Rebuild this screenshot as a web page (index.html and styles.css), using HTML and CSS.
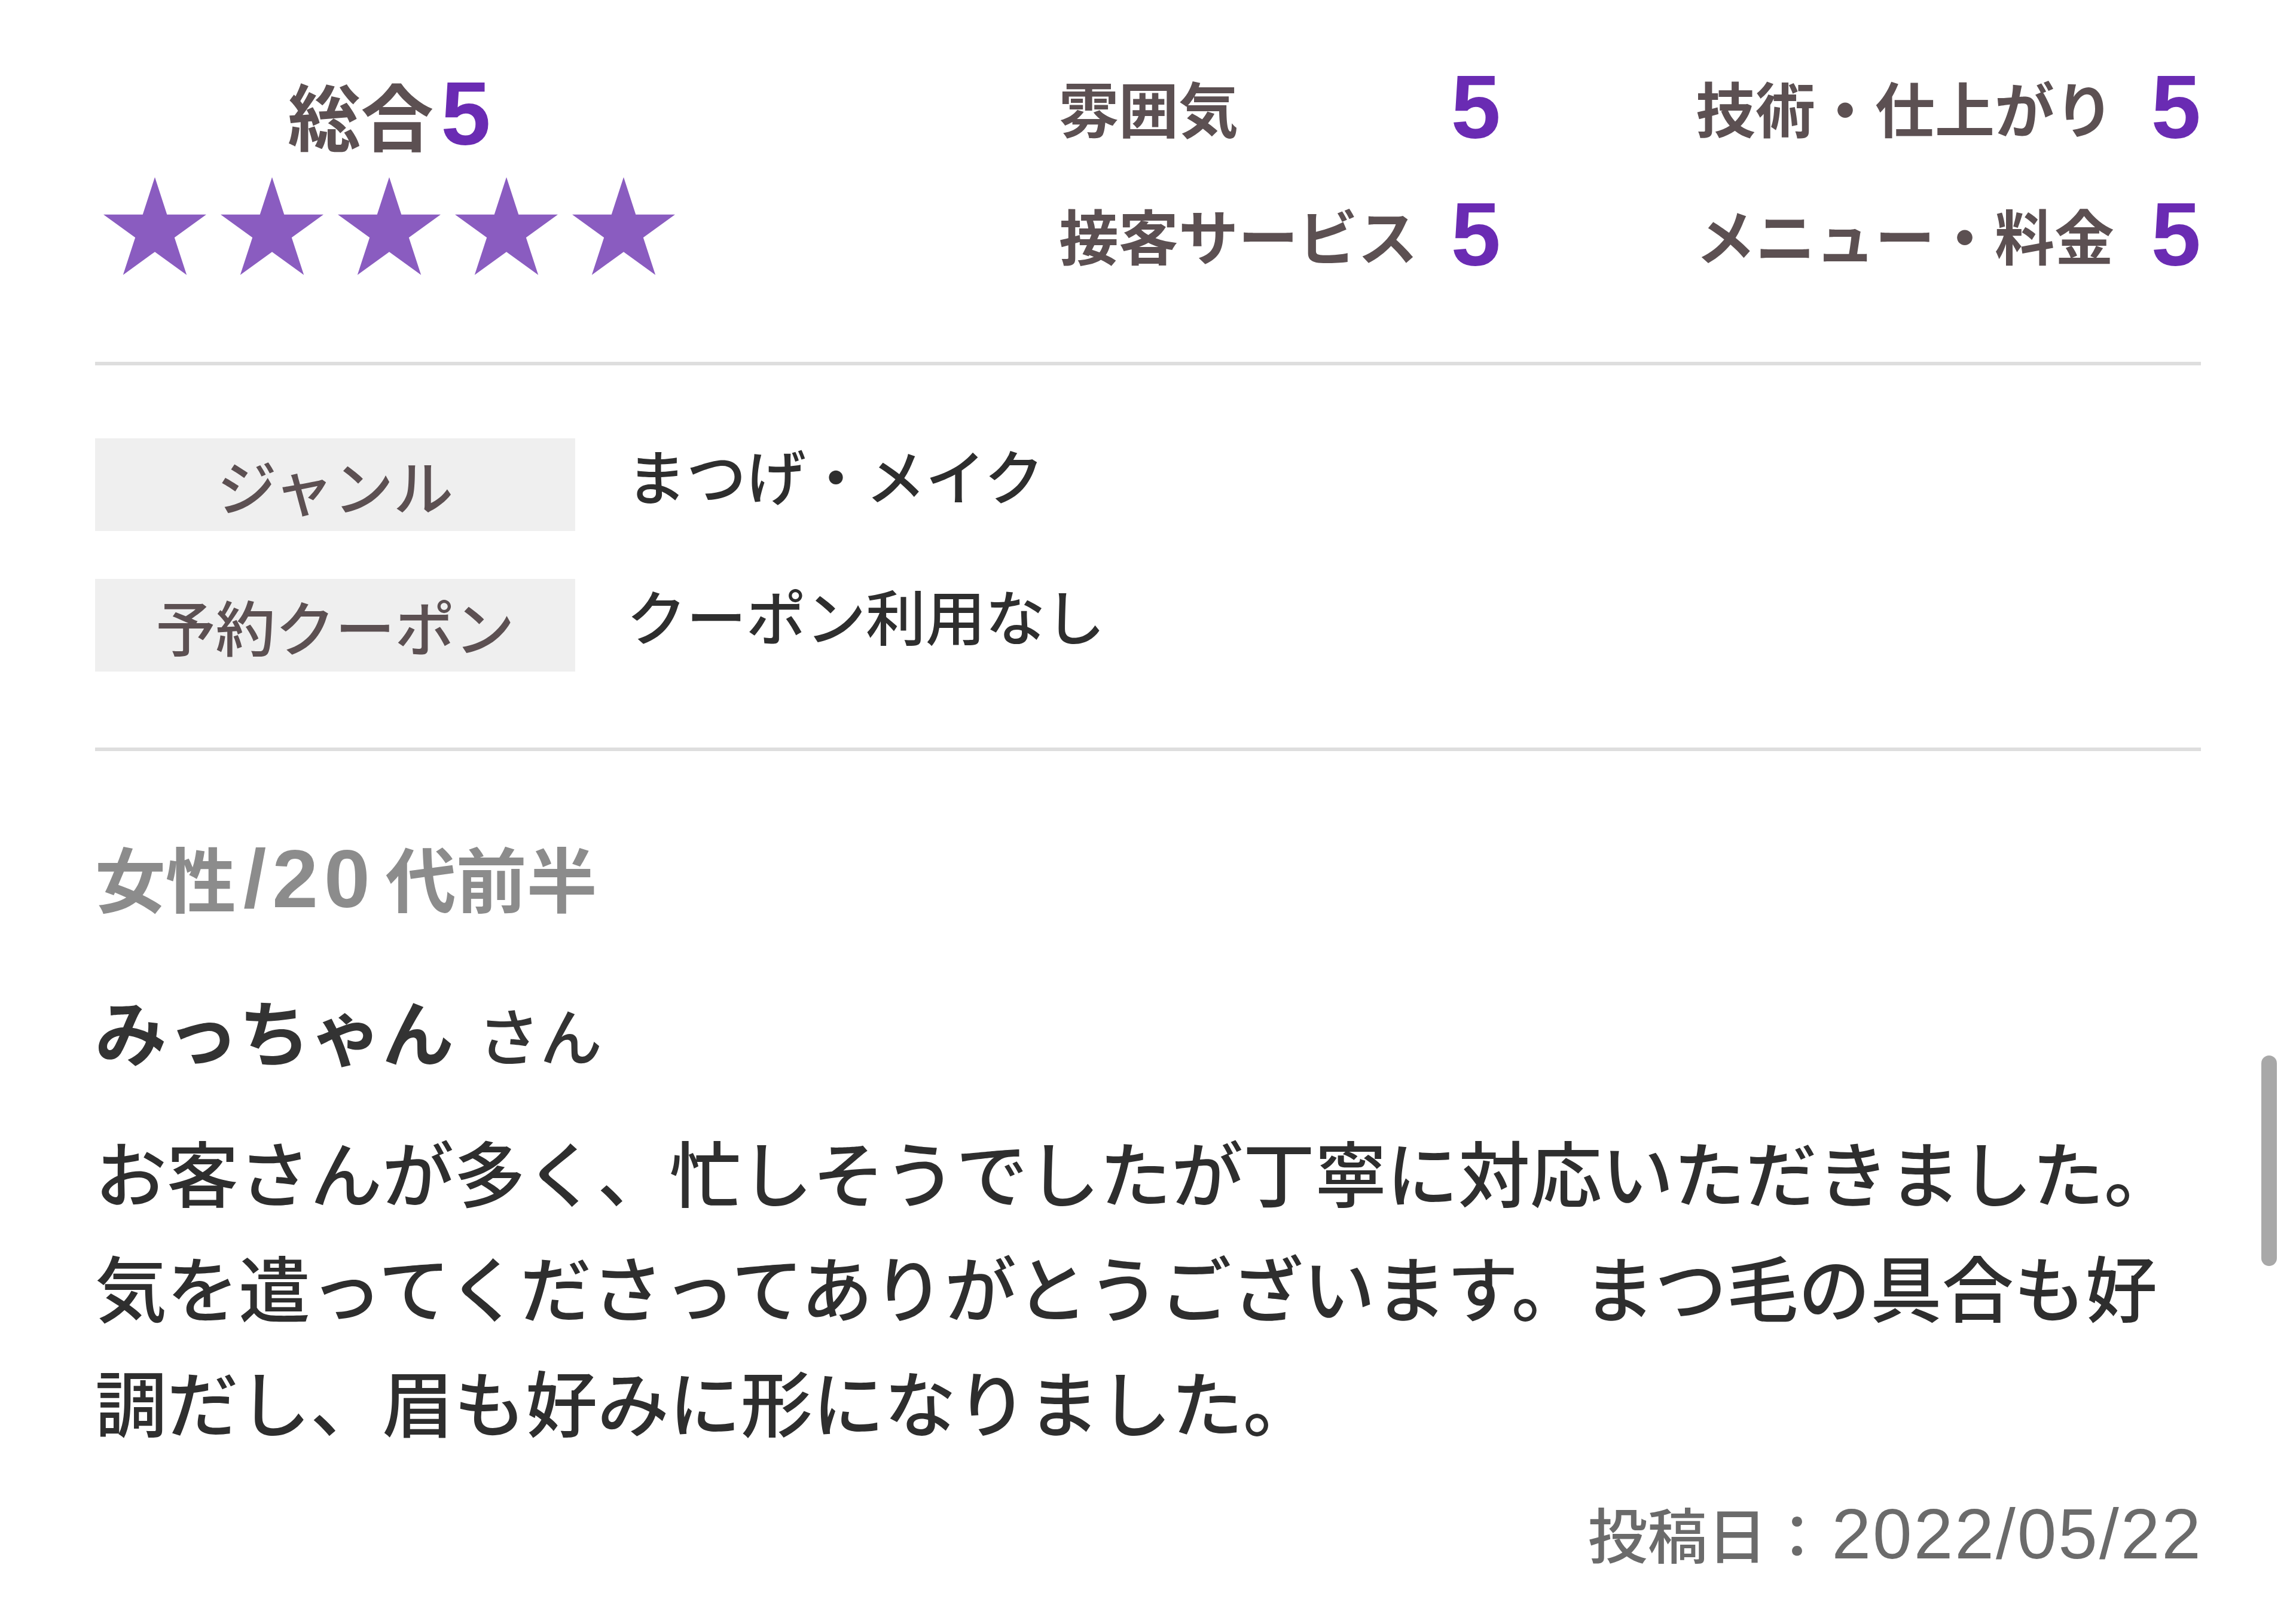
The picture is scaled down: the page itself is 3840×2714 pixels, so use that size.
FILE: index.html
```html
<!DOCTYPE html>
<html lang="ja">
<head>
<meta charset="utf-8">
<title>口コミ</title>
<link rel="stylesheet" href="styles.css">
</head>
<body>
<div class="page">
  <section class="ratings">
    <div class="overall">
      <div class="overall-title"><span class="overall-label">総合</span><span class="num">5</span></div>
      <div class="stars">
        <svg class="star" viewBox="0 0 100 95.1"><polygon points="50,0 61.8,36.33 100,36.33 69.08,58.77 80.93,95.1 50,72.65 19.07,95.1 30.92,58.77 0,36.33 38.2,36.33"/></svg>
        <svg class="star" viewBox="0 0 100 95.1"><polygon points="50,0 61.8,36.33 100,36.33 69.08,58.77 80.93,95.1 50,72.65 19.07,95.1 30.92,58.77 0,36.33 38.2,36.33"/></svg>
        <svg class="star" viewBox="0 0 100 95.1"><polygon points="50,0 61.8,36.33 100,36.33 69.08,58.77 80.93,95.1 50,72.65 19.07,95.1 30.92,58.77 0,36.33 38.2,36.33"/></svg>
        <svg class="star" viewBox="0 0 100 95.1"><polygon points="50,0 61.8,36.33 100,36.33 69.08,58.77 80.93,95.1 50,72.65 19.07,95.1 30.92,58.77 0,36.33 38.2,36.33"/></svg>
        <svg class="star" viewBox="0 0 100 95.1"><polygon points="50,0 61.8,36.33 100,36.33 69.08,58.77 80.93,95.1 50,72.65 19.07,95.1 30.92,58.77 0,36.33 38.2,36.33"/></svg>
      </div>
    </div>
    <div class="detail-grid">
      <div class="detail detail-a"><span class="detail-label">雰囲気</span><span class="num">5</span></div>
      <div class="detail detail-b"><span class="detail-label">技術・仕上がり</span><span class="num">5</span></div>
      <div class="detail detail-a"><span class="detail-label">接客サービス</span><span class="num">5</span></div>
      <div class="detail detail-b"><span class="detail-label">メニュー・料金</span><span class="num">5</span></div>
    </div>
  </section>

  <section class="info">
    <div class="info-row">
      <div class="info-label">ジャンル</div>
      <div class="info-value">まつげ・メイク</div>
    </div>
    <div class="info-row">
      <div class="info-label">予約クーポン</div>
      <div class="info-value">クーポン利用なし</div>
    </div>
  </section>

  <section class="review">
    <div class="reviewer-attr">女性<span class="attr-num">/20</span>代前半</div>
    <div class="reviewer-name">みっちゃん<span class="honorific">さん</span></div>
    <p class="review-body">お客さんが多く、忙しそうでしたが丁寧に対応いただきました。気を遣ってくださってありがとうございます。まつ毛の具合も好調だし、眉も好みに形になりました。</p>
    <div class="post-date">投稿日：<span class="date-num">2022/05/22</span></div>
  </section>
</div>
<div class="scroll-indicator"></div>
</body>
</html>
```
FILE: styles.css
```css
html, body {
  margin: 0;
  padding: 0;
  background: #ffffff;
}

body {
  font-family: "Noto Sans CJK JP", "Noto Sans", sans-serif;
  color: #333333;
  width: 3840px;
  min-height: 2714px;
  position: relative;
  overflow: hidden;
}

.page {
  margin: 0 159px;
}

/* ---------- ratings ---------- */
.ratings {
  display: flex;
  align-items: flex-start;
  padding: 100px 0 134px;
  border-bottom: 6px solid #dedede;
}

.overall {
  width: 984px;
  display: flex;
  flex-direction: column;
  align-items: center;
}

.overall-title {
  height: 180px;
  display: flex;
  align-items: center;
  gap: 12px;
}

.overall-label {
  font-size: 122px;
  font-weight: 700;
  color: #5c5052;
  line-height: 1;
}

.num {
  font-family: "Liberation Sans", Arial, sans-serif;
  font-weight: 700;
  font-size: 150px;
  color: #6a2bb3;
  line-height: 1;
}

.stars {
  margin-top: 14px;
  display: flex;
  gap: 24px;
  height: 167px;
  align-items: center;
}

.star {
  width: 172px;
  height: 164px;
  display: block;
}

.star polygon {
  fill: #8a5cc0;
}

.detail-grid {
  margin-left: auto;
  display: grid;
  grid-template-columns: 739px 845px;
  column-gap: 326px;
  row-gap: 55px;
}

.detail {
  height: 158px;
  display: flex;
  align-items: center;
  justify-content: space-between;
}

.detail-label {
  font-size: 100px;
  font-weight: 700;
  color: #5c5052;
  line-height: 1;
}

/* ---------- info table ---------- */
.info {
  padding: 122px 0 127px;
  border-bottom: 6px solid #dedede;
  display: flex;
  flex-direction: column;
  gap: 80px;
}

.info-row {
  display: flex;
  align-items: flex-start;
  gap: 86px;
}

.info-label {
  width: 803px;
  height: 155px;
  background: #efefef;
  display: flex;
  align-items: center;
  justify-content: center;
  font-size: 100px;
  font-weight: 500;
  color: #5c5052;
}

.info-value {
  font-size: 100px;
  line-height: 120px;
  font-weight: 500;
  color: #2e2e2e;
}

/* ---------- review ---------- */
.review {
  padding-top: 135px;
}

.reviewer-attr {
  font-size: 118px;
  line-height: 150px;
  font-weight: 700;
  color: #8c8c8c;
}

.attr-num {
  font-family: "Liberation Sans", Arial, sans-serif;
  font-size: 138px;
  letter-spacing: 10px;
  margin: 0 16px 0 12px;
}

.reviewer-name {
  margin-top: 103px;
  font-size: 120px;
  line-height: 150px;
  font-weight: 700;
  color: #333333;
}

.honorific {
  font-size: 104px;
  font-weight: 500;
  margin-left: 40px;
}

.review-body {
  margin: 58px 0 0;
  font-size: 120px;
  line-height: 192px;
  font-weight: 500;
  color: #2e2e2e;
}

.post-date {
  margin-top: 60px;
  text-align: right;
  font-size: 100px;
  line-height: 130px;
  font-weight: 500;
  color: #6b6b6b;
}

.date-num {
  font-family: "Liberation Sans", Arial, sans-serif;
  font-size: 118px;
  letter-spacing: 3px;
  margin-left: 8px;
  margin-right: -3px;
}

/* overlay scroll indicator */
.scroll-indicator {
  position: absolute;
  left: 3782px;
  top: 1765px;
  width: 26px;
  height: 352px;
  border-radius: 13px;
  background: #a8a8a8;
}
```
